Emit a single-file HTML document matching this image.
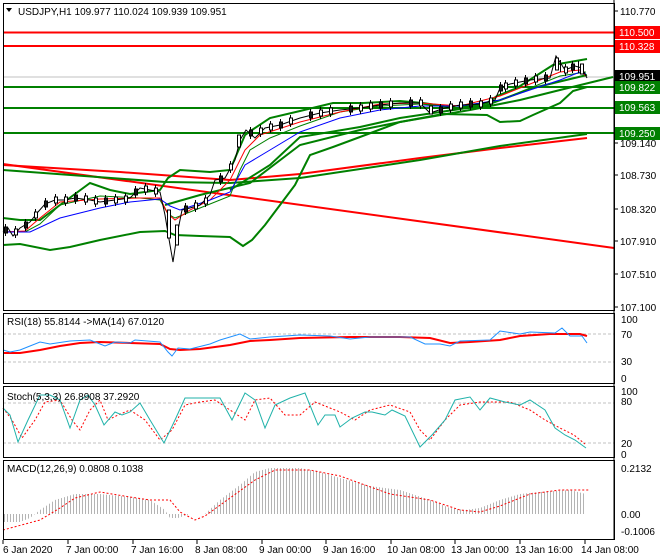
<!DOCTYPE html>
<html><head><meta charset="utf-8"><style>
html,body{margin:0;padding:0;background:#fff;}
svg{display:block;font-family:"Liberation Sans",sans-serif;font-size:10px;}
</style></head><body>
<svg width="660" height="560" viewBox="0 0 660 560" xmlns="http://www.w3.org/2000/svg">
<defs>
<pattern id="st" width="3" height="10" patternUnits="userSpaceOnUse"><rect x="1" y="0" width="1" height="10" fill="#b4b4b4"/></pattern>
</defs>
<rect width="660" height="560" fill="#fff"/>
<g>
<line x1="3" y1="77" x2="614" y2="77" stroke="#c0c0c0"/>
<line x1="3" y1="32.5" x2="614" y2="32.5" stroke="#f00" stroke-width="2"/>
<line x1="3" y1="46" x2="614" y2="46" stroke="#f00" stroke-width="2"/>
<line x1="3" y1="87" x2="614" y2="87" stroke="#008000" stroke-width="2"/>
<line x1="3" y1="108" x2="614" y2="108" stroke="#008000" stroke-width="2"/>
<line x1="3" y1="133" x2="614" y2="133" stroke="#008000" stroke-width="2"/>
<line x1="3" y1="164" x2="614" y2="248" stroke="#f00" stroke-width="2"/>
<polyline fill="none" stroke="#f00" stroke-width="2" points="3,165 120,172 230,180 300,174 420,158 500,148 587,138"/>
<polyline fill="none" stroke="#008000" stroke-width="2" points="3,170 165,182 230,183 300,178 420,160 500,146 587,134"/>
<polyline fill="none" stroke="#008000" stroke-width="2" points="165,205 200,195 250,183 300,145 360,130 400,122 470,110 520,100 560,90 613,77"/>
<polyline fill="none" stroke="#008000" stroke-width="2" points="230,190 270,165 300,137 360,127 400,118 487,105 533,88 587,75"/>
<polyline fill="none" stroke="#008000" stroke-width="2" points="3,218 20,220 40,220 60,205 90,183 110,190 130,194 160,190 168,178 180,170 210,172 230,170 245,135 252,130 270,118 300,111 333,103 363,103 400,101 423,103 457,108 487,103 497,96 517,88 553,65 587,59"/>
<polyline fill="none" stroke="#008000" stroke-width="2" points="3,245 20,244 50,250 70,247 100,240 140,232 165,231 175,235 200,236 230,237 243,246 252,240 265,225 280,205 295,185 305,165 310,155 333,147 360,137 400,122 443,114 487,115 500,122 520,121 533,115 560,103 573,91 587,87"/>
<polyline fill="none" stroke="#008000" stroke-width="1" points="3,232 25,232 40,224 60,205 100,196 140,198 160,200 168,214 175,218 190,212 210,204 230,196 240,170 250,150 270,138 300,126 340,112 380,106 420,104 460,108 500,100 530,88 560,76 586,72"/>
<polyline fill="none" stroke="#f00" stroke-width="1" points="3,232 25,231 40,218 60,202 100,199 140,198 160,198 168,214 175,220 190,210 210,200 230,180 245,150 260,135 300,122 340,112 380,104 420,103 460,106 500,96 530,84 560,72 580,70 586,76"/>
<polyline fill="none" stroke="#0000ff" stroke-width="1" points="3,232 30,232 60,218 100,208 130,202 160,199 170,206 180,210 210,200 230,192 245,165 270,150 300,132 340,118 380,110 420,106 460,106 500,100 530,90 560,80 580,72 586,74"/>
<polyline fill="none" stroke="#000" stroke-width="1" points="3,232 8,228 13,236 20,228 30,222 38,212 45,204 55,200 65,200 75,198 90,200 100,202 115,200 130,198 140,188 150,190 160,192 165,215 170,245 173,262 177,235 182,210 190,208 200,205 210,195 215,180 225,178 235,160 240,140 246,130 255,138 265,128 280,125 300,118 320,113 340,110 360,108 380,105 400,103 420,103 430,113 445,108 460,105 480,104 495,100 500,88 510,84 530,80 550,78 556,56 565,70 575,66 582,68 587,78"/>
<path stroke="#000" stroke-width="1" fill="none" d="M5.5,224v12M15.5,226v12M25.5,219v12M35.5,209v12M45.5,198v12M55.5,194v12M65.5,194v12M75.5,192v12M85.5,193v12M95.5,195v12M105.5,195v12M115.5,194v12M125.5,193v12M135.5,186v12M145.5,183v12M155.5,185v12M185.5,203v12M195.5,200v12M205.5,195v12M220.5,173v12M230.5,161v12M250.5,127v12M260.5,125v12M270.5,121v12M280.5,119v12M290.5,115v12M310.5,109v12M320.5,107v12M330.5,105v12M350.5,103v12M360.5,102v12M370.5,100v12M380.5,99v12M390.5,98v12M410.5,97v12M420.5,97v12M440.5,104v12M450.5,101v12M460.5,99v12M470.5,98v12M480.5,98v12M490.5,95v12M500.5,82v12M505.5,80v12M515.5,77v12M525.5,75v12M535.5,73v12M545.5,72v12M560.5,60v12M565.5,64v12M572.5,61v12M578.5,61v12"/>
<path stroke="#000" stroke-width="1" fill="#1a1a1a" d="M4.5,227h3v6h-3zM24.5,222h3v6h-3zM44.5,201h3v6h-3zM74.5,195h3v6h-3zM104.5,198h3v6h-3zM134.5,189h3v6h-3zM184.5,206h3v6h-3zM219.5,176h3v6h-3zM249.5,130h3v6h-3zM279.5,122h3v6h-3zM309.5,112h3v6h-3zM349.5,106h3v6h-3zM379.5,102h3v6h-3zM409.5,100h3v6h-3zM439.5,107h3v6h-3zM469.5,101h3v6h-3zM499.5,85h3v6h-3zM524.5,78h3v6h-3zM544.5,75h3v6h-3zM571.5,64h3v6h-3z"/>
<path stroke="#000" stroke-width="1" fill="#fff" d="M14.5,229h3v6h-3zM34.5,212h3v6h-3zM54.5,197h3v6h-3zM64.5,197h3v6h-3zM84.5,196h3v6h-3zM94.5,198h3v6h-3zM114.5,197h3v6h-3zM124.5,196h3v6h-3zM144.5,186h3v6h-3zM154.5,188h3v6h-3zM167.5,210h3v28h-3zM175.5,225h3v20h-3zM194.5,203h3v6h-3zM204.5,198h3v6h-3zM229.5,164h3v6h-3zM237.5,135h3v12h-3zM259.5,128h3v6h-3zM269.5,124h3v6h-3zM289.5,118h3v6h-3zM319.5,110h3v6h-3zM329.5,108h3v6h-3zM359.5,105h3v6h-3zM369.5,103h3v6h-3zM389.5,101h3v6h-3zM419.5,100h3v6h-3zM429.5,106h3v8h-3zM449.5,104h3v6h-3zM459.5,102h3v6h-3zM479.5,101h3v6h-3zM489.5,98h3v6h-3zM504.5,83h3v6h-3zM514.5,80h3v6h-3zM534.5,76h3v6h-3zM555.5,58h3v12h-3zM564.5,67h3v6h-3zM580.5,64h3v10h-3z"/>
<text x="18" y="15" fill="#000">USDJPY,H1  109.977 110.024 109.939 109.951</text>
<path d="M6,8 L12,8 L9,12 Z" fill="#000"/>
</g>
<g fill="#000">
<line x1="614" y1="11" x2="618" y2="11" stroke="#000"/><text x="620" y="15">110.770</text>
<rect x="615" y="26" width="45" height="13" fill="#f00"/><text x="619" y="36" fill="#fff">110.500</text>
<rect x="615" y="40" width="45" height="13" fill="#f00"/><text x="619" y="50" fill="#fff">110.328</text>
<rect x="615" y="70" width="45" height="13" fill="#000"/><text x="619" y="80" fill="#fff">109.951</text>
<rect x="615" y="81" width="45" height="13" fill="#008000"/><text x="619" y="91" fill="#fff">109.822</text>
<rect x="615" y="101" width="45" height="13" fill="#008000"/><text x="619" y="111" fill="#fff">109.563</text>
<rect x="615" y="127" width="45" height="13" fill="#008000"/><text x="619" y="137" fill="#fff">109.250</text>
<line x1="614" y1="143" x2="618" y2="143" stroke="#000"/><text x="620" y="147">109.140</text>
<line x1="614" y1="175" x2="618" y2="175" stroke="#000"/><text x="620" y="179">108.730</text>
<line x1="614" y1="209" x2="618" y2="209" stroke="#000"/><text x="620" y="213">108.320</text>
<line x1="614" y1="241" x2="618" y2="241" stroke="#000"/><text x="620" y="245">107.910</text>
<line x1="614" y1="274" x2="618" y2="274" stroke="#000"/><text x="620" y="278">107.510</text>
<line x1="614" y1="307" x2="618" y2="307" stroke="#000"/><text x="620" y="311">107.100</text>
</g>
<line x1="3" y1="334" x2="614" y2="334" stroke="#c0c0c0" stroke-dasharray="3,2"/>
<line x1="3" y1="362" x2="614" y2="362" stroke="#c0c0c0" stroke-dasharray="3,2"/>
<polyline fill="none" stroke="#f00" stroke-width="2" points="3,353 20,353 40,350 60,346 80,343 100,342 130,343 160,344 170,349 180,350 200,349 230,345 250,341 270,340 300,338 350,337 400,337 430,338 450,343 470,342 500,340 520,336 550,334 580,334 587,336"/>
<polyline fill="none" stroke="#1e90ff" stroke-width="1" points="3,350 10,352 20,350 30,346 40,342 50,344 70,341 90,340 100,344 105,346 115,342 130,343 135,340 160,342 168,352 172,356 178,348 190,349 210,344 220,340 240,334 250,339 270,337 300,335 330,336 350,339 370,337 410,337 425,344 440,344 450,346 460,341 490,340 500,331 520,334 530,332 555,333 562,328 570,336 582,336 587,343"/>
<text x="7" y="325">RSI(18) 55.8144  -&gt;MA(14) 67.0120</text>
<text x="621" y="323">100</text><text x="621" y="338">70</text><text x="621" y="365">30</text><text x="621" y="382">0</text>
<line x1="3" y1="403" x2="614" y2="403" stroke="#c0c0c0" stroke-dasharray="3,2"/>
<line x1="3" y1="443" x2="614" y2="443" stroke="#c0c0c0" stroke-dasharray="3,2"/>
<polyline fill="none" stroke="#f00" stroke-width="1" stroke-dasharray="2,2" points="3,408 12,420 22,438 35,420 45,402 60,400 72,420 80,430 90,410 100,400 108,420 118,415 130,410 145,420 160,440 172,430 185,405 200,402 215,400 230,410 245,420 255,400 270,398 285,415 300,415 315,402 340,412 355,420 370,410 390,405 410,412 420,430 430,440 445,420 460,405 480,402 510,402 530,410 545,420 560,428 574,435 585,444"/>
<polyline fill="none" stroke="#20b2aa" stroke-width="1" points="3,408 10,415 18,442 28,420 40,395 50,395 60,400 70,428 80,400 88,395 95,405 104,425 115,412 122,415 130,412 140,403 150,420 164,443 175,420 185,398 200,398 220,398 232,420 245,393 255,400 265,428 275,405 290,398 305,393 318,425 325,415 335,415 340,427 352,418 365,412 372,412 385,415 392,410 405,416 420,447 432,435 445,420 455,400 470,397 480,410 490,398 505,402 520,405 530,400 545,410 555,428 565,435 575,440 586,448"/>
<text x="7" y="400">Stoch(5,3,3) 26.8908 37.2920</text>
<text x="621" y="395">100</text><text x="621" y="405">80</text><text x="621" y="447">20</text><text x="621" y="458">0</text>
<polygon fill="url(#st)" points="3,514 3,522 20,522 30,518 40,510 55,500 75,494 100,494 130,497 150,500 165,510 170,518 178,518 190,514 205,514 220,500 240,485 255,472 270,468 300,468 320,472 340,478 370,486 400,490 430,500 450,508 465,510 480,508 500,500 520,494 540,492 570,490 586,494 586,514"/>
<polyline fill="none" stroke="#f00" stroke-width="1" stroke-dasharray="2,2" points="3,530 40,520 60,508 75,498 100,492 130,497 150,500 170,500 180,512 195,520 205,516 230,498 255,480 275,470 310,470 340,476 390,494 430,500 460,510 480,512 500,506 530,494 560,490 590,490"/>
<text x="7" y="472">MACD(12,26,9) 0.0808 0.1038</text>
<text x="621" y="472">0.2132</text><text x="621" y="518">0.00</text><text x="621" y="535">-0.1006</text>
<rect x="3.5" y="3.5" width="611" height="307" fill="none" stroke="#000"/>
<rect x="3.5" y="313.5" width="611" height="70" fill="none" stroke="#000"/>
<rect x="3.5" y="386.5" width="611" height="71" fill="none" stroke="#000"/>
<rect x="3.5" y="460.5" width="611" height="79" fill="none" stroke="#000"/>
<line x1="614" y1="0" x2="614" y2="540" stroke="#000"/>
<g stroke="#000">
<line x1="3" y1="540" x2="3" y2="544"/><line x1="68" y1="540" x2="68" y2="544"/><line x1="133" y1="540" x2="133" y2="544"/><line x1="197" y1="540" x2="197" y2="544"/><line x1="262" y1="540" x2="262" y2="544"/><line x1="326" y1="540" x2="326" y2="544"/><line x1="391" y1="540" x2="391" y2="544"/><line x1="455" y1="540" x2="455" y2="544"/><line x1="520" y1="540" x2="520" y2="544"/><line x1="585" y1="540" x2="585" y2="544"/>
</g>
<g fill="#000">
<text x="3" y="553">6 Jan 2020</text><text x="66" y="553">7 Jan 00:00</text><text x="131" y="553">7 Jan 16:00</text><text x="195" y="553">8 Jan 08:00</text><text x="259" y="553">9 Jan 00:00</text><text x="323" y="553">9 Jan 16:00</text><text x="387" y="553">10 Jan 08:00</text><text x="451" y="553">13 Jan 00:00</text><text x="515" y="553">13 Jan 16:00</text><text x="581" y="553">14 Jan 08:00</text>
</g>
</svg>
</body></html>
